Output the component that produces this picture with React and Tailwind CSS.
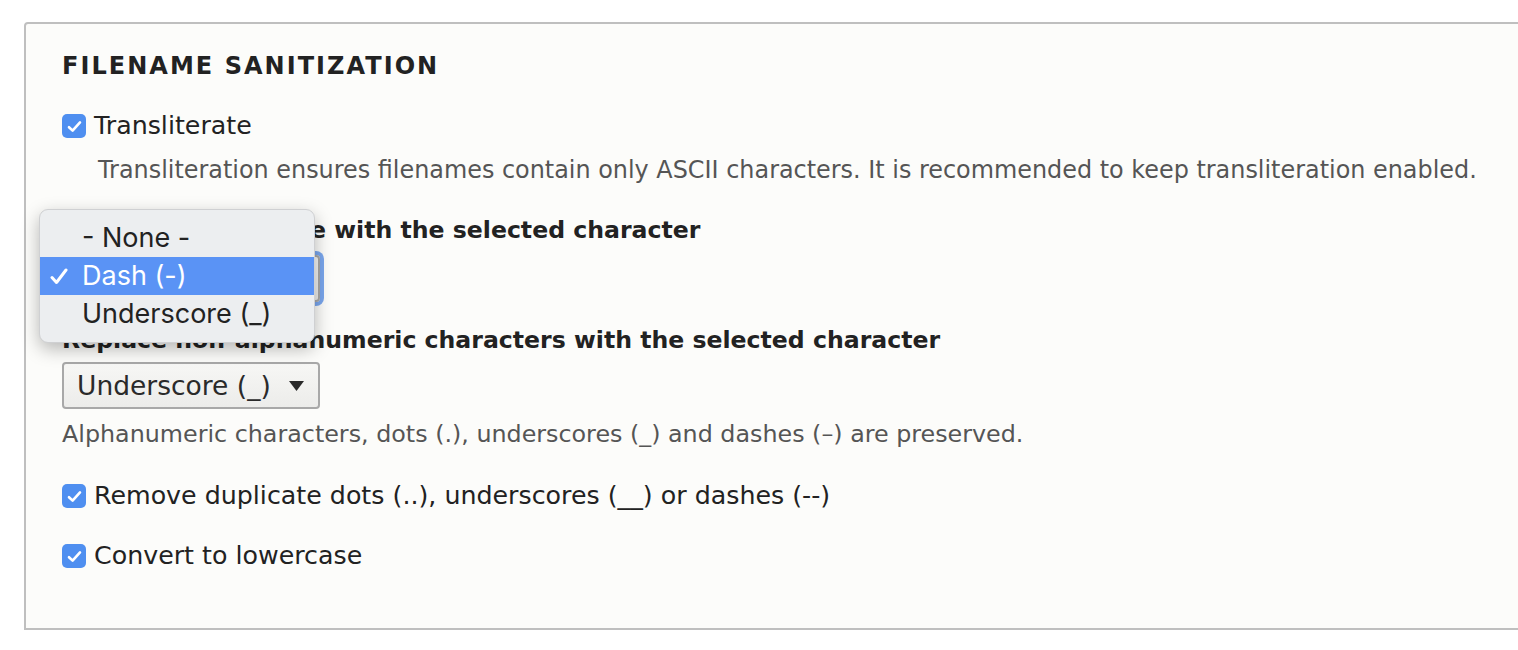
import React from "react";

const body = { fontFamily: '"DejaVu Sans", Verdana, sans-serif' };
const menuFont = { fontFamily: 'Inter, "Liberation Sans", Arial, sans-serif' };

function Check() {
    return (
        <span className="flex h-[24px] w-[24px] shrink-0 items-center justify-center rounded-[5px] bg-[#4f8ff0]">
            <svg width="15" height="13" viewBox="0 0 15 13" fill="none">
                <path d="M2 7.2 L5.6 10.6 L13 2.4" stroke="white" strokeWidth="2.6" strokeLinecap="round" strokeLinejoin="round" />
            </svg>
        </span>
    );
}

function CheckRow({ label }) {
    return (
        <div className="flex items-center gap-[8px]">
            <Check />
            <span className="text-[25.3px] leading-[30px] text-[#222]">{label}</span>
        </div>
    );
}

function Select({ value, focused }) {
    return (
        <div
            className={
                "flex h-[47px] w-[258px] items-center justify-between rounded-[4px] border-2 border-[#a8a8a8] bg-gradient-to-b from-[#f7f7f5] to-[#ececea] pl-[13px] pr-[13px] " +
                (focused ? "ring-4 ring-[#7aa7ee]" : "")
            }
        >
            <span className="text-[26.5px] text-[#2a2a2a]">{value}</span>
            <svg width="17" height="12" viewBox="0 0 17 12">
                <path d="M1 1 H16 L8.5 11 Z" fill="#2a2a2a" />
            </svg>
        </div>
    );
}

export default function App() {
    return (
        <div className="relative h-[650px] w-[1518px] overflow-hidden bg-white" style={body}>
            <div className="pl-[24px] pt-[22px]">
                <div className="h-[608px] w-[1520px] rounded-tl-[4px] border-2 border-[#bfbfbf] bg-[#fcfcfa] pl-[36px] pt-[26px]">
                    <h2 className="text-[24px] font-bold uppercase leading-[32px] tracking-[0.085em] text-[#222]">
                        Filename sanitization
                    </h2>

                    <div className="mt-[29px]">
                        <CheckRow label="Transliterate" />
                        <p className="mt-[15px] pl-[36px] text-[23.9px] leading-[28px] text-[#555]">
                            Transliteration ensures filenames contain only ASCII characters. It is recommended to keep transliteration enabled.
                        </p>
                    </div>

                    <div className="mt-[31px]">
                        <div className="text-[23.6px] font-bold leading-[30px] text-[#222]">
                            Replace whitespace with the selected character
                        </div>
                        <div className="mt-[10px]">
                            <Select value="Dash (-)" focused />
                        </div>
                    </div>

                    <div className="mt-[23px]">
                        <div className="text-[23.6px] font-bold leading-[30px] text-[#222]">
                            Replace non-alphanumeric characters with the selected character
                        </div>
                        <div className="mt-[7px]">
                            <Select value="Underscore (_)" />
                        </div>
                        <p className="mt-[11px] text-[23.8px] leading-[28px] text-[#555]">
                            Alphanumeric characters, dots (.), underscores (_) and dashes (–) are preserved.
                        </p>
                    </div>

                    <div className="mt-[33px]">
                        <CheckRow label="Remove duplicate dots (..), underscores (__) or dashes (--)" />
                    </div>
                    <div className="mt-[30px]">
                        <CheckRow label="Convert to lowercase" />
                    </div>
                </div>
            </div>

            {/* open native select menu */}
            <div
                className="absolute left-[39px] top-[209px] w-[276px] rounded-[9px] border border-[#cfd0d2] bg-[#eceef0] py-[9px] shadow-[0_6px_18px_rgba(0,0,0,0.28)]"
                style={menuFont}
            >
                <div className="flex h-[38px] items-center pl-[42px] text-[27px] text-[#222]">- None -</div>
                <div className="flex h-[38px] items-center bg-[#5a93f5] pl-[10px] text-[27px] text-white">
                    <svg className="mr-[14px]" width="18" height="17" viewBox="0 0 18 17" fill="none">
                        <path d="M2 9.5 L6.5 14.5 L16 2" stroke="white" strokeWidth="3" strokeLinecap="round" strokeLinejoin="round" />
                    </svg>
                    Dash (-)
                </div>
                <div className="flex h-[38px] items-center pl-[42px] text-[27px] text-[#222]">Underscore (_)</div>
            </div>
        </div>
    );
}
